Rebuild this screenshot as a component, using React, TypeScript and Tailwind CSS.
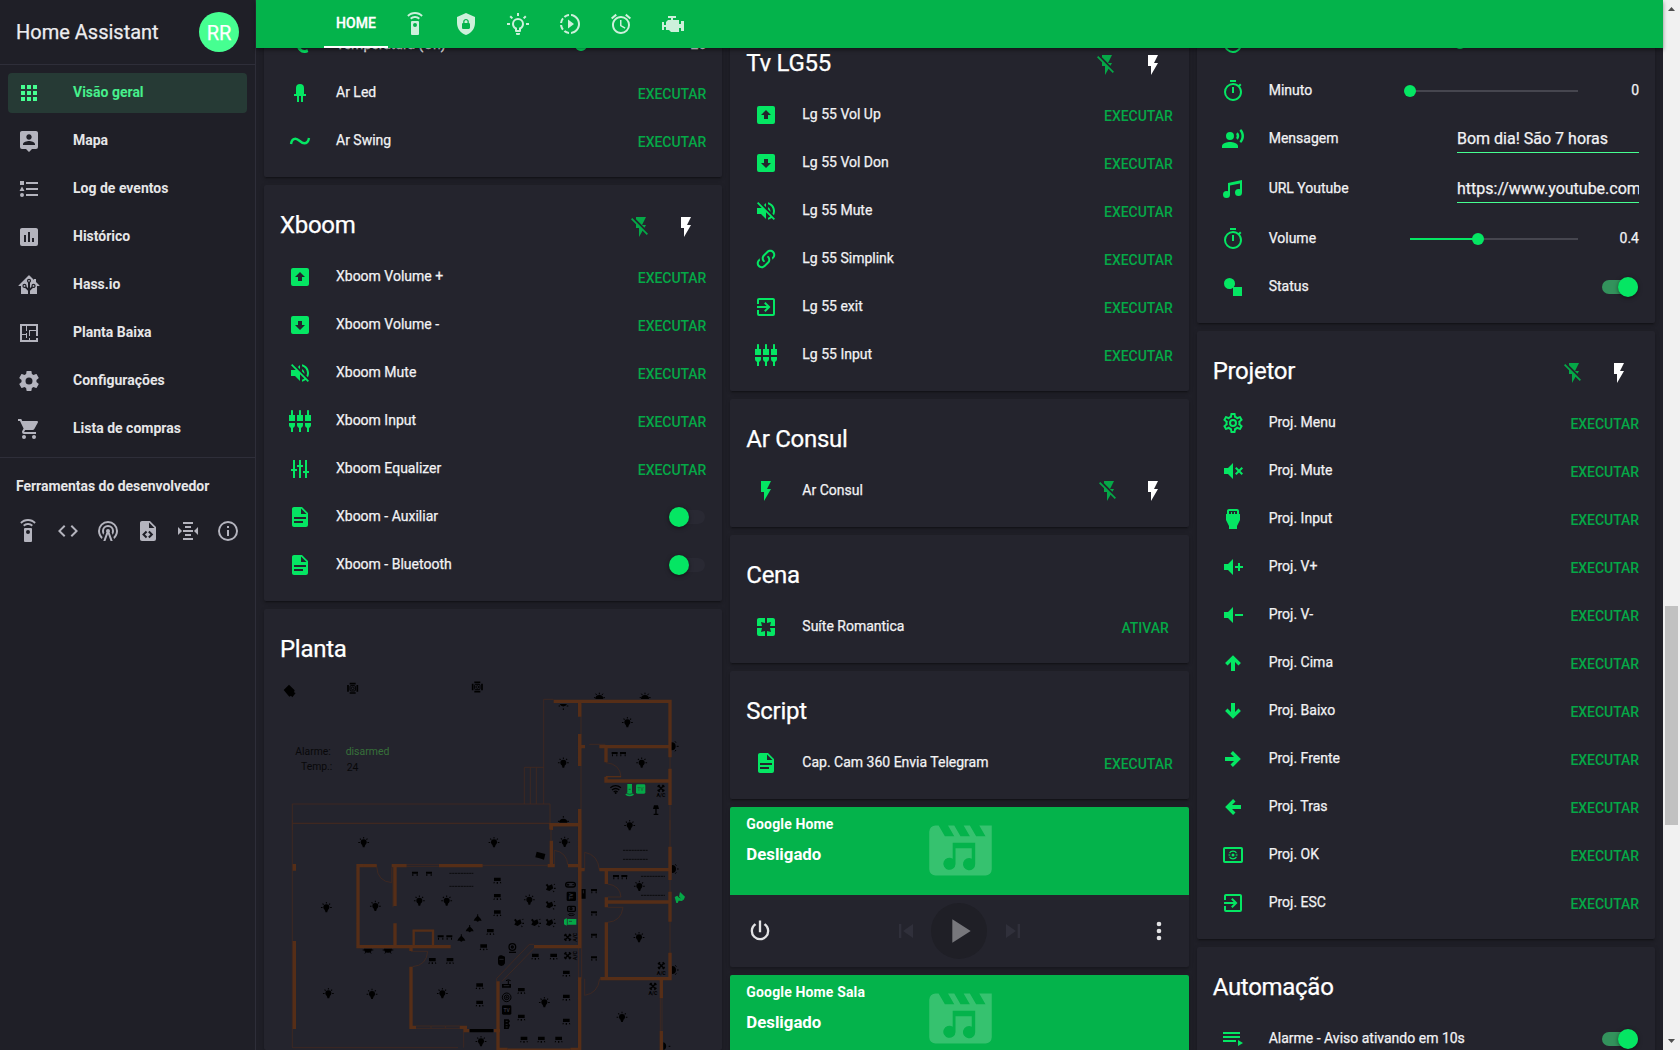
import type { ReactNode } from "react";
import {
  MdAlarm,
  MdSettingsInputComponent,
  MdSettingsInputHdmi,
  MdSlowMotionVideo,
  MdVolumeOff,
} from "react-icons/md";

const P = {
  apps: "M16,20H20V16H16M16,14H20V10H16M10,8H14V4H10M16,8H20V4H16M10,14H14V10H10M4,14H8V10H4M4,20H8V16H4M10,20H14V16H10M4,8H8V4H4V8Z",
  map: "M18,16H6V15.1C6,13.1 10,12 12,12C14,12 18,13.1 18,15.1M12,5.3C13.5,5.3 14.7,6.5 14.7,8C14.7,9.5 13.5,10.7 12,10.7C10.5,10.7 9.3,9.5 9.3,8C9.3,6.5 10.5,5.3 12,5.3M19,2H5C3.89,2 3,2.89 3,4V18A2,2 0 0,0 5,20H9L12,23L15,20H19A2,2 0 0,0 21,18V4C21,2.89 20.1,2 19,2Z",
  log: "M5,9.5L7.5,14H2.5L5,9.5M3,4H7V8H3V4M5,20A2,2 0 0,0 7,18A2,2 0 0,0 5,16A2,2 0 0,0 3,18A2,2 0 0,0 5,20M9,5V7H21V5H9M9,19H21V17H9V19M9,13H21V11H9V13Z",
  history: "M17,17H15V13H17M13,17H11V7H13M9,17H7V10H9M19,3H5C3.89,3 3,3.89 3,5V19A2,2 0 0,0 5,21H19A2,2 0 0,0 21,19V5C21,3.89 20.1,3 19,3Z",
  hass: "M21.8,13H20V21H13V17.67L15.79,14.88L16.5,15C17.66,15 18.6,14.06 18.6,12.9C18.6,11.74 17.66,10.8 16.5,10.8A2.1,2.1 0 0,0 14.4,12.9L14.5,13.61L13,15.13V9.65C13.66,9.29 14.1,8.6 14.1,7.8A2.1,2.1 0 0,0 12,5.7A2.1,2.1 0 0,0 9.9,7.8C9.9,8.6 10.34,9.29 11,9.65V15.13L9.5,13.61L9.6,12.9A2.1,2.1 0 0,0 7.5,10.8A2.1,2.1 0 0,0 5.4,12.9A2.1,2.1 0 0,0 7.5,15L8.21,14.88L11,17.67V21H4V13H2.25C1.83,13 1.42,13 1.42,12.79C1.43,12.57 1.85,12.15 2.28,11.72L11,3C11.33,2.67 11.67,2.33 12,2.33C12.33,2.33 12.67,2.67 13,3L17,7V6H19V9L21.78,11.78C22.18,12.18 22.59,12.59 22.6,12.8C22.6,13 22.2,13 21.8,13M7.5,12A0.9,0.9 0 0,1 8.4,12.9A0.9,0.9 0 0,1 7.5,13.8A0.9,0.9 0 0,1 6.6,12.9A0.9,0.9 0 0,1 7.5,12M16.5,12C17,12 17.4,12.4 17.4,12.9C17.4,13.4 17,13.8 16.5,13.8A0.9,0.9 0 0,1 15.6,12.9A0.9,0.9 0 0,1 16.5,12M12,6.9C12.5,6.9 12.9,7.3 12.9,7.8C12.9,8.3 12.5,8.7 12,8.7C11.5,8.7 11.1,8.3 11.1,7.8C11.1,7.3 11.5,6.9 12,6.9Z",
  floor: "M10,5V10H9V5H5V13H9V12H10V17H9V14H5V19H12V17H13V19H19V17H21V21H3V3H21V15H19V10H13V15H12V9H19V5H10Z",
  settings: "M12,15.5A3.5,3.5 0 0,1 8.5,12A3.5,3.5 0 0,1 12,8.5A3.5,3.5 0 0,1 15.5,12A3.5,3.5 0 0,1 12,15.5M19.43,12.97C19.47,12.65 19.5,12.33 19.5,12C19.5,11.67 19.47,11.34 19.43,11L21.54,9.37C21.73,9.22 21.78,8.95 21.66,8.73L19.66,5.27C19.54,5.05 19.27,4.96 19.05,5.05L16.56,6.05C16.04,5.66 15.5,5.32 14.87,5.07L14.5,2.42C14.46,2.18 14.25,2 14,2H10C9.75,2 9.54,2.18 9.5,2.42L9.13,5.07C8.5,5.32 7.96,5.66 7.44,6.05L4.95,5.05C4.73,4.96 4.46,5.05 4.34,5.27L2.34,8.73C2.21,8.95 2.27,9.22 2.46,9.37L4.57,11C4.53,11.34 4.5,11.67 4.5,12C4.5,12.33 4.53,12.65 4.57,12.97L2.46,14.63C2.27,14.78 2.21,15.05 2.34,15.27L4.34,18.73C4.46,18.95 4.73,19.03 4.95,18.95L7.44,17.94C7.96,18.34 8.5,18.68 9.13,18.93L9.5,21.58C9.54,21.82 9.75,22 10,22H14C14.25,22 14.46,21.82 14.5,21.58L14.87,18.93C15.5,18.67 16.04,18.34 16.56,17.94L19.05,18.95C19.27,19.03 19.54,18.95 19.66,18.73L21.66,15.27C21.78,15.05 21.73,14.78 21.54,14.63L19.43,12.97Z",
  cart: "M17,18C15.89,18 15,18.89 15,20A2,2 0 0,0 17,22A2,2 0 0,0 19,20C19,18.89 18.1,18 17,18M1,2V4H3L6.6,11.59L5.24,14.04C5.09,14.32 5,14.65 5,15A2,2 0 0,0 7,17H19V15H7.42A0.25,0.25 0 0,1 7.17,14.75C7.17,14.7 7.18,14.66 7.2,14.63L8.1,13H15.55C16.3,13 16.96,12.58 17.3,11.97L20.88,5.5C20.95,5.34 21,5.17 21,5A1,1 0 0,0 20,4H5.21L4.27,2M7,18C5.89,18 5,18.89 5,20A2,2 0 0,0 7,22A2,2 0 0,0 9,20C9,18.89 8.1,18 7,18Z",
  remote: "M12,0C8.96,0 6.21,1.23 4.22,3.22L5.63,4.63C7.26,3 9.5,2 12,2C14.5,2 16.74,3 18.36,4.64L19.77,3.23C17.79,1.23 15.04,0 12,0M7.05,6.05L8.46,7.46C9.37,6.56 10.62,6 12,6C13.38,6 14.63,6.56 15.54,7.46L16.95,6.05C15.68,4.78 13.93,4 12,4C10.07,4 8.32,4.78 7.05,6.05M12,15A2,2 0 0,1 10,13A2,2 0 0,1 12,11A2,2 0 0,1 14,13A2,2 0 0,1 12,15M15,9H9A1,1 0 0,0 8,10V22A1,1 0 0,0 9,23H15A1,1 0 0,0 16,22V10A1,1 0 0,0 15,9Z",
  code: "M14.6,16.6L19.2,12L14.6,7.4L16,6L22,12L16,18L14.6,16.6M9.4,16.6L4.8,12L9.4,7.4L8,6L2,12L8,18L9.4,16.6Z",
  tower: "M12,10A2,2 0 0,1 14,12C14,12.5 13.82,12.94 13.53,13.29L16.7,22H14.57L12,14.93L9.43,22H7.3L10.47,13.29C10.18,12.94 10,12.5 10,12A2,2 0 0,1 12,10M12,8A4,4 0 0,0 8,12C8,12.5 8.1,13 8.28,13.46L7.4,15.86C6.53,14.81 6,13.47 6,12A6,6 0 0,1 12,6A6,6 0 0,1 18,12C18,13.47 17.47,14.81 16.6,15.86L15.72,13.46C15.9,13 16,12.5 16,12A4,4 0 0,0 12,8M12,4A8,8 0 0,0 4,12C4,14.36 5,16.5 6.64,17.94L5.92,19.94C3.54,18.11 2,15.23 2,12A10,10 0 0,1 12,2A10,10 0 0,1 22,12C22,15.23 20.46,18.11 18.08,19.94L17.36,17.94C19,16.5 20,14.36 20,12A8,8 0 0,0 12,4Z",
  fileCode: "M13,9H18.5L13,3.5V9M6,2H14L20,8V20A2,2 0 0,1 18,22H6C4.89,22 4,21.1 4,20V4C4,2.89 4.89,2 6,2M6.12,15.5L9.86,19.24L11.28,17.83L8.95,15.5L11.28,13.17L9.86,11.76L6.12,15.5M17.28,15.5L13.54,11.76L12.12,13.17L14.45,15.5L12.12,17.83L13.54,19.24L17.28,15.5Z",
  altimeter: "M7,3V5H17V3H7M9,7V9H15V7H9M2,7.96V16.04L6.03,12L2,7.96M22.03,7.96L18,12L22.03,16.04V7.96M7,11V13H17V11H7M9,15V17H15V15H9M7,19V21H17V19H7Z",
  info: "M11,9H13V7H11M12,20C7.59,20 4,16.41 4,12C4,7.59 7.59,4 12,4C16.41,4 20,7.59 20,12C20,16.41 16.41,20 12,20M12,2A10,10 0 0,0 2,12A10,10 0 0,0 12,22A10,10 0 0,0 22,12A10,10 0 0,0 12,2M11,17H13V11H11V17Z",
  shield: "M12,1L3,5V11C3,16.55 6.84,21.74 12,23C17.16,21.74 21,16.55 21,11V5L12,1M12,7C13.4,7 14.8,8.1 14.8,9.5V11C15.4,11 16,11.6 16,12.3V15.8C16,16.4 15.4,17 14.7,17H9.2C8.6,17 8,16.4 8,15.7V12.2C8,11.6 8.6,11 9.2,11V9.5C9.2,8.1 10.6,7 12,7M12,8.2C11.2,8.2 10.5,8.7 10.5,9.5V11H13.5V9.5C13.5,8.7 12.8,8.2 12,8.2Z",
  bulb: "M20,11H23V13H20V11M1,11H4V13H1V11M13,1V4H11V1H13M4.92,3.5L7.05,5.64L5.63,7.05L3.5,4.93L4.92,3.5M16.95,5.63L19.07,3.5L20.5,4.93L18.37,7.05L16.95,5.63M12,6A6,6 0 0,1 18,12C18,14.22 16.79,16.16 15,17.2V19A1,1 0 0,1 14,20H10A1,1 0 0,1 9,19V17.2C7.21,16.16 6,14.22 6,12A6,6 0 0,1 12,6M14,21V22A1,1 0 0,1 13,23H11A1,1 0 0,1 10,22V21H14M11,18H13V15.87C14.73,15.43 16,13.86 16,12A4,4 0 0,0 12,8A4,4 0 0,0 8,12C8,13.86 9.27,15.43 11,15.87V18Z",
  engine: "M7,4V6H10V8H7L5,10V13H3V10H1V18H3V15H5V18H8L10,20H18V16H20V19H23V9H20V12H18V8H12V6H15V4H7Z",
  celsius: "M16.5,5C18.05,5 19.5,5.47 20.69,6.28L19.53,9.17C18.73,8.44 17.67,8 16.5,8C14,8 12,10 12,12.5C12,15 14,17 16.5,17C17.53,17 18.47,16.66 19.23,16.08L20.37,18.93C19.24,19.61 17.92,20 16.5,20A7.5,7.5 0 0,1 9,12.5A7.5,7.5 0 0,1 16.5,5M6,3A3,3 0 0,1 9,6A3,3 0 0,1 6,9A3,3 0 0,1 3,6A3,3 0 0,1 6,3Z",
  led: "M12,3A4,4 0 0 0 8,7V13H6V15H9V21H11V15H13V21H15V15H18V13H16V7A4,4 0 0 0 12,3Z",
  boxUp: "M12,7L7,12H10V16H14V12H17L12,7M19,21H5A2,2 0 0,1 3,19V5A2,2 0 0,1 5,3H19A2,2 0 0,1 21,5V19A2,2 0 0,1 19,21Z",
  boxDown: "M12,17L17,12H14V8H10V12H7L12,17M5,3H19A2,2 0 0,1 21,5V19A2,2 0 0,1 19,21H5A2,2 0 0,1 3,19V5A2,2 0 0,1 5,3Z",
  tune: "M5 3V12H3V14H5V21H7V14H9V12H7V3M11 3V8H9V10H11V21H13V10H15V8H13V3M17 3V14H15V16H17V21H19V16H21V14H19V3Z",
  doc: "M13,9H18.5L13,3.5V9M6,2H14L20,8V20A2,2 0 0,1 18,22H6C4.89,22 4,21.1 4,20V4C4,2.89 4.89,2 6,2M15,18V16H6V18H15M18,14V12H6V14H18Z",
  flash: "M7,2V13H10V22L17,10H13L17,2H7Z",
  flashOff: "M17,10H13L17,2H7V4.18L15.46,12.64M3.27,3L2,4.27L7,9.27V13H10V22L13.58,15.86L17.73,20L19,18.73L3.27,3Z",
  link: "M10.59,13.41C11,13.8 11,14.44 10.59,14.83C10.2,15.22 9.56,15.22 9.17,14.83C7.22,12.88 7.22,9.71 9.17,7.76V7.76L12.71,4.22C14.66,2.27 17.83,2.27 19.78,4.22C21.73,6.17 21.73,9.34 19.78,11.29L18.29,12.78C18.3,11.96 18.17,11.14 17.89,10.36L18.36,9.88C19.54,8.71 19.54,6.81 18.36,5.64C17.19,4.46 15.29,4.46 14.12,5.64L10.59,9.17C9.41,10.34 9.41,12.24 10.59,13.41M13.41,9.17C13.8,8.78 14.44,8.78 14.83,9.17C16.78,11.12 16.78,14.29 14.83,16.24V16.24L11.29,19.78C9.34,21.73 6.17,21.73 4.22,19.78C2.27,17.83 2.27,14.66 4.22,12.71L5.71,11.22C5.7,12.04 5.83,12.86 6.11,13.65L5.64,14.12C4.46,15.29 4.46,17.19 5.64,18.36C6.81,19.54 8.71,19.54 9.88,18.36L13.41,14.83C14.59,13.66 14.59,11.76 13.41,10.59C13,10.2 13,9.56 13.41,9.17Z",
  exit: "M19,3H5C3.89,3 3,3.89 3,5V9H5V5H19V19H5V15H3V19A2,2 0 0,0 5,21H19A2,2 0 0,0 21,19V5C21,3.89 20.1,3 19,3M10.08,15.58L11.5,17L16.5,12L11.5,7L10.08,8.41L12.67,11H3V13H12.67L10.08,15.58Z",
  pages: "M19,3H13V8L17,7L16,11H21V5C21,3.89 20.1,3 19,3M17,17L13,16V21H19A2,2 0 0,0 21,19V13H16M8,13H3V19A2,2 0 0,0 5,21H11V16L7,17M3,5V11H8L7,7L11,8V3H5C3.89,3 3,3.89 3,5Z",
  timer: "M12,20A7,7 0 0,1 5,13A7,7 0 0,1 12,6A7,7 0 0,1 19,13A7,7 0 0,1 12,20M19.03,7.39L20.45,5.97C20,5.46 19.55,5 19.04,4.56L17.62,6C16.07,4.74 14.12,4 12,4A9,9 0 0,0 3,13A9,9 0 0,0 12,22C17,22 21,17.97 21,13C21,10.88 20.26,8.93 19.03,7.39M11,14H13V8H11M15,1H9V3H15V1Z",
  voice: "M9,5A4,4 0 0,1 13,9A4,4 0 0,1 9,13A4,4 0 0,1 5,9A4,4 0 0,1 9,5M9,15C11.67,15 17,16.34 17,19V21H1V19C1,16.34 6.33,15 9,15M16.76,5.36C18.78,7.56 18.78,10.61 16.76,12.63L15.08,10.94C15.92,9.76 15.92,8.23 15.08,7.05L16.76,5.36M20.07,2C24,6.05 23.97,12.11 20.07,16L18.44,14.37C21.21,11.19 21.21,6.65 18.44,3.63L20.07,2Z",
  music: "M21,3V15.5A3.5,3.5 0 0,1 17.5,19A3.5,3.5 0 0,1 14,15.5A3.5,3.5 0 0,1 17.5,12C18.04,12 18.55,12.12 19,12.34V6.47L9,8.6V17.5A3.5,3.5 0 0,1 5.5,21A3.5,3.5 0 0,1 2,17.5A3.5,3.5 0 0,1 5.5,14C6.04,14 6.55,14.12 7,14.34V6L21,3Z",
  shapes: "M8.5,3A5.5,5.5 0 0,1 14,8.5C14,9.83 13.53,11.05 12.74,12H21V21H12V12.74C11.05,13.53 9.83,14 8.5,14A5.5,5.5 0 0,1 3,8.5A5.5,5.5 0 0,1 8.5,3Z",
  gear: "M12,8A4,4 0 0,1 16,12A4,4 0 0,1 12,16A4,4 0 0,1 8,12A4,4 0 0,1 12,8M12,10A2,2 0 0,0 10,12A2,2 0 0,0 12,14A2,2 0 0,0 14,12A2,2 0 0,0 12,10M10,22C9.75,22 9.54,21.82 9.5,21.58L9.13,18.93C8.5,18.68 7.96,18.34 7.44,17.94L4.95,18.95C4.73,19.03 4.46,18.95 4.34,18.73L2.34,15.27C2.21,15.05 2.27,14.78 2.46,14.63L4.57,12.97L4.5,12L4.57,11L2.46,9.37C2.27,9.22 2.21,8.95 2.34,8.73L4.34,5.27C4.46,5.05 4.73,4.96 4.95,5.05L7.44,6.05C7.96,5.66 8.5,5.32 9.13,5.07L9.5,2.42C9.54,2.18 9.75,2 10,2H14C14.25,2 14.46,2.18 14.5,2.42L14.87,5.07C15.5,5.32 16.04,5.66 16.56,6.05L19.05,5.05C19.27,4.96 19.54,5.05 19.66,5.27L21.66,8.73C21.79,8.95 21.73,9.22 21.54,9.37L19.43,11L19.5,12L19.43,13L21.54,14.63C21.73,14.78 21.79,15.05 21.66,15.27L19.66,18.73C19.54,18.95 19.27,19.04 19.05,18.95L16.56,17.95C16.04,18.34 15.5,18.68 14.87,18.93L14.5,21.58C14.46,21.82 14.25,22 14,22H10M11.25,4L10.88,6.61C9.68,6.86 8.62,7.5 7.85,8.39L5.44,7.35L4.69,8.65L6.8,10.2C6.4,11.37 6.4,12.64 6.8,13.8L4.68,15.36L5.43,16.66L7.86,15.62C8.63,16.5 9.68,17.14 10.87,17.38L11.24,20H12.76L13.13,17.39C14.32,17.14 15.37,16.5 16.14,15.62L18.57,16.66L19.32,15.36L17.2,13.81C17.6,12.64 17.6,11.37 17.2,10.2L19.31,8.65L18.56,7.35L16.15,8.39C15.38,7.5 14.32,6.86 13.12,6.62L12.75,4H11.25Z",
  volMute: "M3,9H7L12,4V20L7,15H3V9M16.59,12L14,9.41L15.41,8L18,10.59L20.59,8L22,9.41L19.41,12L22,14.59L20.59,16L18,13.41L15.41,16L14,14.59L16.59,12Z",
  volPlus: "M3,9H7L12,4V20L7,15H3V9M14,11H17V8H19V11H22V13H19V16H17V13H14V11Z",
  volMinus: "M3,9H7L12,4V20L7,15H3V9M14,11H22V13H14V11Z",
  up: "M14,20H10V11L6.5,14.5L4.08,12.08L12,4.16L19.92,12.08L17.5,14.5L14,11V20Z",
  down: "M10,4H14V13L17.5,9.5L19.92,11.92L12,19.84L4.08,11.92L6.5,9.5L10,13V4Z",
  right: "M4,10V14H13L9.5,17.5L11.92,19.92L19.84,12L11.92,4.08L9.5,6.5L13,10H4Z",
  left: "M20,10V14H11L14.5,17.5L12.08,19.92L4.16,12L12.08,4.08L14.5,6.5L11,10H20Z",
  playlist: "M19,9H2V11H19V9M19,5H2V7H19V5M2,15H15V13H2V15M17,13V19L22,16L17,13Z",
  power: "M16.56,5.44L15.11,6.89C16.84,7.94 18,9.83 18,12A6,6 0 0,1 12,18A6,6 0 0,1 6,12C6,9.83 7.16,7.94 8.88,6.88L7.44,5.44C5.36,6.88 4,9.28 4,12A8,8 0 0,0 12,20A8,8 0 0,0 20,12C20,9.28 18.64,6.88 16.56,5.44M13,3H11V13H13",
  prev: "M6,6H8V18H6V6M9.5,12L18,18V6L9.5,12Z",
  next: "M16,18H18V6H16M6,18L14.5,12L6,6V18Z",
  play: "M8,5V19L19,12L8,5Z",
  dots: "M12,16A2,2 0 0,1 14,18A2,2 0 0,1 12,20A2,2 0 0,1 10,18A2,2 0 0,1 12,16M12,10A2,2 0 0,1 14,12A2,2 0 0,1 12,14A2,2 0 0,1 10,12A2,2 0 0,1 12,10M12,4A2,2 0 0,1 14,6A2,2 0 0,1 12,8A2,2 0 0,1 10,6A2,2 0 0,1 12,4Z",
  clapper: "M18,4L20,7.4H17L15,4H13L15,7.4H12L10,4H8L10,7.4H7L5,4H4A2,2 0 0,0 2,6V18A2,2 0 0,0 4,20H20A2,2 0 0,0 22,18V4H18Z",
};

function Icon({ d, className = "size-6" }: { d: string; className?: string }) {
  return (
    <svg viewBox="0 0 24 24" className={`shrink-0 ${className}`} fill="currentColor" fillRule="evenodd">
      <path d={d} />
    </svg>
  );
}

const sineIcon = (
  <svg viewBox="0 0 24 24" className="size-6" fill="none" stroke="currentColor" strokeWidth="2.4">
    <path d="M3,15C3.6,11.3 5.2,9.7 7.4,9.7C10.8,9.7 12.8,14.3 16.2,14.3C18.8,14.3 20.4,12.4 21,9" />
  </svg>
);

const okIcon = (
  <svg viewBox="0 0 24 24" className="size-6" fill="none" stroke="currentColor" strokeWidth="2">
    <rect x="3" y="5" width="18" height="14" rx="0.8" />
    <path d="M8.6,9.8A4.2,4.2 0 0 1 15.4,9.8M8.6,14.2A4.2,4.2 0 0 0 15.4,14.2" strokeWidth="1.3" />
    <path d="M7.5,11.3H9.3M7.5,12.7H9.3M14.7,11.3H16.5M14.7,12.7H16.5" strokeWidth="0.7" />
    <circle cx="12" cy="12" r="1.5" fill="currentColor" stroke="none" />
  </svg>
);

const navItems: [string, string][] = [
  ["Visão geral", P.apps],
  ["Mapa", P.map],
  ["Log de eventos", P.log],
  ["Histórico", P.history],
  ["Hass.io", P.hass],
  ["Planta Baixa", P.floor],
  ["Configurações", P.settings],
  ["Lista de compras", P.cart],
];

function Sidebar() {
  return (
    <aside className="flex w-64 shrink-0 flex-col border-r border-[#2e2e39] bg-[#1f1f27] text-[#e6e6e8]">
      <div className="flex h-[65px] items-center justify-between border-b border-[#2e2e39] pr-4 pl-4">
        <span className="text-xl text-[#ededf0] [-webkit-text-stroke:0.25px]">Home Assistant</span>
        <span className="flex size-10 items-center justify-center rounded-full bg-[#46ff91] pt-px text-xl text-white [-webkit-text-stroke:0.25px]">
          RR
        </span>
      </div>
      <nav className="flex flex-col gap-2 pt-2">
        {navItems.map(([label, d], i) => (
          <div
            key={label}
            className={`mr-2 ml-2 flex h-10 items-center gap-8 rounded-sm pl-[9px] ${i === 0 ? "bg-[#263a35] text-[#46f08c]" : ""}`}
          >
            <Icon d={d} className={i === 0 ? "size-6 text-[#46ff91]" : "size-6 text-[#b4b4be]"} />
            <span className="pb-0.5 text-sm font-bold">{label}</span>
          </div>
        ))}
      </nav>
      <div className="mt-2 border-t border-[#2e2e39] px-4 pt-[18px]">
        <div className="text-sm leading-5 font-bold tracking-[-0.04px]">Ferramentas do desenvolvedor</div>
        <div className="mt-[23px] flex gap-4 text-[#b4b4be]">
          {[P.remote, P.code, P.tower, P.fileCode, P.altimeter, P.info].map((d) => (
            <Icon key={d} d={d} />
          ))}
        </div>
      </div>
    </aside>
  );
}

function TabBar() {
  const icons: ReactNode[] = [
    <Icon d={P.remote} />,
    <Icon d={P.shield} />,
    <Icon d={P.bulb} />,
    <MdSlowMotionVideo className="size-6" />,
    <MdAlarm className="size-6" />,
    <Icon d={P.engine} />,
  ];
  return (
    <header className="relative z-10 flex h-12 shrink-0 bg-[#04b34b] pl-[68px] text-white shadow-[0_2px_4px_rgba(0,0,0,0.45)]">
      <div className="mr-px flex w-16 items-center justify-center border-b-2 border-white text-sm font-medium tracking-[0.1px] [-webkit-text-stroke:0.3px]">
        HOME
      </div>
      {icons.map((icon, i) => (
        <div key={i} className="flex w-[51.6px] items-center justify-center text-white/80">
          {icon}
        </div>
      ))}
    </header>
  );
}

function Card({ title, action, children, className = "pb-4" }: { title?: string; action?: boolean; children?: ReactNode; className?: string }) {
  return (
    <section className={`shrink-0 rounded-xs bg-[#24242d] shadow-[0_2px_2px_rgba(0,0,0,0.14),0_1px_5px_rgba(0,0,0,0.12),0_3px_1px_-2px_rgba(0,0,0,0.2)] ${className}`}>
      {title && (
        <div className="flex h-[72px] justify-between pt-6 pr-6 pl-4">
          <h2 className="text-2xl leading-8 tracking-[-0.012em] text-white [-webkit-text-stroke:0.25px]">{title}</h2>
          {action && (
            <div className="mt-1.5 flex h-6 gap-[21.5px]">
              <Icon d={P.flashOff} className="size-6 text-[#05a847]" />
              <Icon d={P.flash} className="size-6 text-white" />
            </div>
          )}
        </div>
      )}
      <div className="flex flex-col gap-2">{children}</div>
    </section>
  );
}

function Row({ icon, label, children, tall }: { icon: string | ReactNode; label: string; children?: ReactNode; tall?: boolean }) {
  return (
    <div className={`flex items-center px-4 ${tall ? "h-[42px] pb-[3px]" : "h-10"}`}>
      <span className="flex w-10 shrink-0 items-center justify-center text-[#05e663]">
        {typeof icon === "string" ? <Icon d={icon} /> : icon}
      </span>
      <span className="ml-4 flex-1 pb-0.5 text-sm whitespace-nowrap text-[#f2f2f4] [-webkit-text-stroke:0.25px]">{label}</span>
      {children}
    </div>
  );
}

function Run({ text = "EXECUTAR" }: { text?: string }) {
  return (
    <span className={`pt-0.5 text-sm font-medium tracking-[-0.05px] text-[#05a847] ${text === "ATIVAR" ? "mr-1" : ""}`}>{text}</span>
  );
}

function Toggle({ on }: { on?: boolean }) {
  return (
    <span className={`mr-px flex h-3.5 w-9 items-center rounded-full ${on ? "justify-end bg-[#33925c]" : "bg-[#292933]"}`}>
      <span className="size-5 rounded-full bg-[#05e663] shadow-[0_1px_4px_rgba(0,0,0,0.5)]" />
    </span>
  );
}

function Slider({ pct, value }: { pct: number; value: string }) {
  return (
    <>
      <span className="flex h-0.5 w-[168px] items-center bg-[#46464f]">
        <span className="h-0.5 bg-[#05e663]" style={{ width: `${pct}%` }} />
        <span className="-ml-1.5 size-3 shrink-0 rounded-full bg-[#05e663]" />
      </span>
      <span className="w-[61px] pb-0.5 text-right text-sm text-[#f2f2f4] [-webkit-text-stroke:0.25px]">{value}</span>
    </>
  );
}

function Field({ value }: { value: string }) {
  return (
    <span className="flex h-[29px] w-[182px] items-center overflow-hidden border-b border-[#46ff91] pt-0.5 text-base whitespace-nowrap text-[#f2f2f4] [-webkit-text-stroke:0.25px]">
      {value}
    </span>
  );
}

function MediaCard({ name }: { name: string }) {
  return (
    <section className="shrink-0 overflow-hidden rounded-xs bg-[#24242d] shadow-[0_2px_2px_rgba(0,0,0,0.14),0_1px_5px_rgba(0,0,0,0.12)]">
      <div className="grid h-[88px] grid-cols-3 bg-[#04b34b] pt-[7px] pl-4">
        <div className="whitespace-nowrap text-white">
          <div className="text-sm leading-5 font-bold tracking-[0.15px]">{name}</div>
          <div className="mt-2 text-[16.8px] leading-6 font-bold">Desligado</div>
        </div>
        <svg viewBox="0 0 24 24" className="-mt-px ml-[29px] size-[75px] overflow-visible text-white/20" fill="currentColor">
          <path fillRule="evenodd" d={`${P.clapper}M9.5,9.5V14.6A1.95,1.95 0 1 0 10.4,16.3V11.3H15.6V14.6A1.95,1.95 0 1 0 16.7,16.3V9.5Z`} />
        </svg>
      </div>
      <div className="flex h-[72px] items-center justify-between px-4">
        <Icon d={P.power} className="size-7 text-[#e2e2e4]" />
        <div className="flex items-center gap-3">
          <Icon d={P.prev} className="-mr-px size-7 text-[#30303b]" />
          <span className="flex size-14 items-center justify-center rounded-full bg-[#1f1f26]">
            <Icon d={P.play} className="size-10 text-[#77777c]" />
          </span>
          <Icon d={P.next} className="size-7 text-[#30303b]" />
        </div>
        <Icon d={P.dots} className="size-7 text-[#e2e2e4]" />
      </div>
    </section>
  );
}

/* Floor plan drawing. Its units are a third of a pixel. */
type Pt = [number, number];

const lampPath =
  "M12,5.6A6.4,6.4 0 0,1 18.4,12C18.4,14.4 17,16.4 15,17.6V20H14V22.5H10V20H9V17.6C7,16.4 5.6,14.4 5.6,12A6.4,6.4 0 0,1 12,5.6M20,11.2H23.4V13.4H20ZM.6,11.2H4V13.4H.6ZM11,.8H13V4H11ZM3.2,4.9L4.8,3.3L7,5.5L5.5,7ZM17,5.5L19.2,3.3L20.8,4.9L18.5,7Z";

function Lamp({ p }: { p: Pt }) {
  return <path d={lampPath} transform={`translate(${p[0] - 17} ${p[1] - 17}) scale(1.42)`} />;
}

function Spot({ p }: { p: Pt }) {
  return <path d="M-10,-8H10V2H-10ZM-11,6L-8,4V9H-12ZM-2,5H2V10H-2ZM11,6L8,4V9H12Z" transform={`translate(${p[0]} ${p[1]})`} />;
}

function MiniSpot({ p }: { p: Pt }) {
  return <path d="M-9,-6H9V0H-9ZM-8,1H-5V7H-8ZM5,1H8V7H5Z" transform={`translate(${p[0]} ${p[1]})`} />;
}

function Tilted({ p }: { p: Pt }) {
  return <path d="M-13,-8L-8,-12L-4,-6L6,-10L10,2L-2,10L-12,6L-8,-2ZM10,-10L15,-12V-8ZM12,0H17V4H12ZM8,8L14,12L10,14Z" transform={`translate(${p[0]} ${p[1]})`} />;
}

function Fan({ p, vertical }: { p: Pt; vertical?: boolean }) {
  return (
    <g transform={`translate(${p[0]} ${p[1]})`}>
      <path d="M-9,-9L-3,-3L0,0L3,-3L9,-9M-9,9L-3,3L0,0L3,3L9,9M-10,-4L-4,-10M4,-10L10,-4M-10,4L-4,10M4,10L10,4" fill="none" stroke="#000" strokeWidth="4.5" />
      <text x="0" y={vertical ? 7 : 27} transform={vertical ? "rotate(-90) translate(0 20)" : undefined} textAnchor="middle" fontSize="16" fontWeight="700">
        A/C
      </text>
    </g>
  );
}

function TvBox({ p, on, turned }: { p: Pt; on?: boolean; turned?: boolean }) {
  return (
    <g transform={`translate(${p[0]} ${p[1]})${turned ? " rotate(-90)" : ""}`}>
      <rect x="-14" y="-14" width="28" height="28" rx="4" fill={on ? "#05a847" : "#000"} />
      <text y="5" textAnchor="middle" fontSize="15" fontWeight="700" fill={on ? "#1e6b3c" : "#33333d"}>TV</text>
    </g>
  );
}

const lampsTop: Pt[] = [[1114, 367], [922, 488], [1157, 488], [1121, 676]];
const lampsBottom: Pt[] = [
  [323, 67], [714, 67], [926, 66], [211, 262], [358, 258], [490, 242], [572, 242], [820, 239], [1150, 198],
  [1149, 352], [217, 520], [348, 522], [559, 520], [865, 547], [1098, 591], [675, 664],
];
const spots: Pt[] = [
  [724, 181], [724, 230], [724, 279], [703, 335], [683, 381], [529, 422], [582, 422], [838, 409], [893, 409], [931, 460],
  [931, 532], [931, 604], [671, 498], [671, 550], [796, 512], [796, 592], [804, 658], [856, 658], [908, 658],
];
const miniSpots: Pt[] = [
  [477, 161], [519, 161], [554, 352], [580, 352], [1080, 171], [1105, 171], [1014, 213], [1014, 280], [1014, 347], [1014, 415],
];
const tilted: Pt[] = [[882, 203], [882, 255], [787, 308], [838, 308], [882, 308]];
const pendants: Pt[] = [[665, 295], [641, 327], [616, 355]];

function FloorPlan() {
  return (
    <svg viewBox="0 0 1375 1107" className="h-[369px] w-[458.33px] font-[Roboto,sans-serif]">
      <g transform="translate(-24 -243)">
        <g fill="none" stroke="#44291f" strokeWidth="2.4">
          <path d="M893,298H863V612M805,612V502H863M823,502V612M841,502V612M109,690V612H882V672M109,670H882M975,310V690M1242,470V690M1000,433H1048M1050,488Q1092,492 1095,530" />
        </g>
        <g fill="none" stroke="#562e17" strokeWidth="10">
          <path d="M893,304H1247M1242,300V472M1242,506V615M971,300V350M971,402V498M971,627V690M966,440H987M1030,440H1242M1050,440V487M1045,543H1242M1050,530V548M882,674H971M886,670V690" />
          <path d="M1050,530H1095" strokeWidth="4" />
        </g>
        {lampsTop.map((p) => <Lamp key={`${p}`} p={p} />)}
        <path d="M1018,297A12,12 0 0 1 1042,297ZM1155,297A12,12 0 0 1 1179,297ZM910,668A12,12 0 0 1 934,668ZM911,312A12,12 0 0 0 933,312ZM1247,427A12,12 0 0 1 1247,451Z" />
        <path d="M1014,293H1018M1042,293H1047M1030,278V283M1019,281L1022,285M1041,281L1038,285M1151,293H1155M1179,293H1184M1167,278V283M1156,281L1159,285M1178,281L1175,285M906,664H910M934,664H939M922,648V653M908,318H912M932,318H937M922,325V330M1262,439H1268M1257,424L1260,428M1257,454L1260,450" stroke="#000" strokeWidth="3" />
        <path d="M83,270L99,254L116,271L114,277L119,279L109,292L105,287L100,290Z" />
        {([[290, 265], [664, 261]] as Pt[]).map(([x, y]) => (
          <g key={x} transform={`translate(${x} ${y})`} fill="none" stroke="#000">
            <path d="M-14,-10V10M14,-10V10M-9,-14H9M-9,14H9" strokeWidth="5" />
            <rect x="-8" y="-8" width="16" height="16" rx="3" strokeWidth="3" />
            <circle r="4" strokeWidth="2.5" />
          </g>
        ))}
        <MiniSpot p={[1076, 462]} />
        <MiniSpot p={[1101, 462]} />
        <g fill="none" stroke="#000" strokeWidth="4">
          <path d="M1063,563Q1079,551 1095,563M1068,570Q1079,561 1090,570M1073,576Q1079,571 1085,576" />
        </g>
        <circle cx="1079" cy="579" r="3" />
        <path d="M1114,552H1128V577L1134,584Q1121,594 1108,584L1114,577Z" fill="#05a847" />
        <path d="M1110,580Q1121,586 1132,580M1118,568H1124" stroke="#24242d" strokeWidth="2" fill="none" />
        <TvBox p={[1154, 567]} on />
        <Fan p={[1215, 565]} />
        <path d="M1194,616H1206L1209,627H1202V641H1207V645H1193V641H1198V627H1191Z" />
        <g fontSize="34" fill="#08080a">
          <text x="118" y="465" textLength="106" lengthAdjust="spacingAndGlyphs">Alarme:</text>
          <text x="269" y="465" textLength="131" lengthAdjust="spacingAndGlyphs" fill="#37713a">disarmed</text>
          <text x="135" y="510" textLength="94" lengthAdjust="spacingAndGlyphs">Temp.:</text>
          <text x="272" y="513" textLength="35" lengthAdjust="spacingAndGlyphs">24</text>
        </g>
      </g>
      <g transform="translate(-24 417)">
        <g fill="none" stroke="#44291f" strokeWidth="2.4">
          <path d="M109,0V683H606M109,10H882M623,636V683M452,134H549M452,139H549M680,136H875M885,28V62M977,0V149M1242,0V476M977,149V476M411,140V262M362,140Q364,184 407,188M407,142V188M895,140V91Q932,96 936,136M986,149V97Q1026,104 1030,149M465,394H515Q512,436 470,440M1055,192Q1092,196 1095,231H1055M1055,262H1101Q1096,304 1055,307M986,476V526Q1026,520 1031,476M722,475L820,373H834M738,484L834,385M722,475V484M480,618H611M480,625H611M968,383V476M1213,535V633M1218,535V633M525,618V625M568,618V625" />
        </g>
        <g fill="none" stroke="#562e17" strokeWidth="10">
          <path d="M115,132V152M115,363V627M306,132V383M301,137H362M407,137H452M417,137V258M417,310V377M301,380H584M549,137H680M875,137H896M885,10V28M886,62V140M880,14H971M936,137H971M971,0V383M834,380H976M465,383V393M465,440V627M460,622H480M611,622H633M622,632H640M714,632H732M726,484V690M726,688H755M943,688H976M971,472V690M971,149H986M1030,149H1242M1242,80V180M1242,215V305M1242,398V480M1033,476H1247M1216,480V535M1216,633V690M1051,152V192M1051,232V262M1046,246H1242M1051,307V472" />
          <path d="M473,377V332H531V377" strokeWidth="7" />
          <path d="M322,137H362M755,688H943" strokeWidth="5" />
        </g>
        {lampsBottom.map((p) => <Lamp key={`${p}`} p={p} />)}
        {spots.map((p) => <Spot key={`${p}`} p={p} />)}
        {miniSpots.map((p) => <MiniSpot key={`${p}`} p={p} />)}
        {tilted.map((p) => <Tilted key={`${p}`} p={p} />)}
        {pendants.map(([x, y]) => (
          <path key={x} d="M-1.500,-12H1.500V-7L9,1L12,7H4Q0,13 -4,7H-12L-9,1L-1.500,-7Z" transform={`translate(${x} ${y})`} />
        ))}
        <path d="M641,627H712V637H641ZM324,386A12,12 0 0 0 348,386ZM384,386A12,12 0 0 0 408,386ZM1248,135A12,12 0 0 1 1248,159ZM1248,438A12,12 0 0 1 1248,462ZM1222,667A12,12 0 0 1 1222,690ZM842,95L868,102L864,119L848,114L838,112Z" />
        <path d="M908,4H935M580,160H652M580,199H652M1101,91H1175M1101,118H1175M1155,169H1227M1155,226H1227" stroke="#000" strokeWidth="2.200" strokeDasharray="7 1.500" />
        <path d="M320,390H325M347,390H352M380,390H385M407,390H412M326,400L330,397M346,400L342,397M386,400L390,397M406,400L402,397M1263,147H1268M1258,133L1261,137M1258,161L1261,157M1263,450H1268M1258,436L1261,440M1258,464L1261,460M1238,679H1243" stroke="#000" strokeWidth="3" />
        <TvBox p={[946, 229]} turned />
        <TvBox p={[752, 570]} />
        <Fan p={[935, 352]} vertical />
        <Fan p={[935, 407]} vertical />
        <Fan p={[1216, 437]} />
        <Fan p={[1191, 499]} />
        <g fill="none" stroke="#000" strokeWidth="4">
          <rect x="929" y="187" width="29" height="14" rx="7" />
          <path d="M936,191V198M932,194H940M949,194H955" strokeWidth="3" />
          <rect x="935" y="259" width="23" height="15" rx="3" />
          <circle cx="945" cy="266" r="3" />
          <ellipse cx="946" cy="284" rx="9" ry="3" strokeWidth="2.500" />
          <circle cx="769" cy="381" r="10" />
          <circle cx="769" cy="381" r="3" />
          <path d="M759,397H780" />
          <circle cx="752" cy="532" r="13" strokeWidth="3" />
          <circle cx="752" cy="532" r="7" strokeWidth="3" />
          <circle cx="752" cy="532" r="2" strokeWidth="3" />
          <path d="M750,482Q757,477 764,482M757,482V492" strokeWidth="3" />
        </g>
        <path d="M738,492H765V503H738ZM977,207H989V236H977ZM744,598H758L762,604L758,610L762,616L758,627H744ZM726,415Q727,404 737,406L747,410V430Q744,438 736,438Q726,436 726,428Z" />
        <path d="M743,497H760M749,604H755M749,613H755M749,621H755M982,211V220M730,418H743" stroke="#33333d" strokeWidth="2" />
        <path d="M924,299L932,294V297H961V314H932V317L924,313ZM1256,231L1264,227L1269,233L1281,238L1279,243L1268,242L1265,249H1261ZM1272,216L1287,230L1283,240L1276,236L1269,230Z" fill="#05a847" />
        <path d="M934,297V314M939,304H948" stroke="#24242d" strokeWidth="2" />
      </g>
    </svg>
  );
}

function Runs({ items }: { items: [string | ReactNode, string][] }) {
  return (
    <>
      {items.map(([icon, label]) => (
        <Row key={label} icon={icon} label={label}>
          <Run />
        </Row>
      ))}
    </>
  );
}

const muteIcon = <MdVolumeOff className="size-6" />;
const inputIcon = <MdSettingsInputComponent className="size-6" />;
const hdmiIcon = <MdSettingsInputHdmi className="size-6" />;

export default function App() {
  return (
    <div className="flex h-[1050px] w-[1680px] overflow-hidden bg-[#1f1f27] font-[Roboto,sans-serif]">
      <Sidebar />
      <main className="flex h-full min-w-0 flex-1 flex-col">
        <TabBar />
        <div className="grid min-h-0 flex-1 grid-cols-3 gap-2 overflow-hidden px-2">
          <div className="-mt-[23px] flex min-w-0 flex-col gap-2">
            <Card>
              <Row icon={P.celsius} label="Temperatura (On)">
                <Slider pct={61.5} value="26" />
              </Row>
              <Runs items={[[P.led, "Ar Led"], [sineIcon, "Ar Swing"]]} />
            </Card>
            <Card title="Xboom" action>
              <Runs
                items={[
                  [P.boxUp, "Xboom Volume +"],
                  [P.boxDown, "Xboom Volume -"],
                  [muteIcon, "Xboom Mute"],
                  [inputIcon, "Xboom Input"],
                  [P.tune, "Xboom Equalizer"],
                ]}
              />
              <Row icon={P.doc} label="Xboom - Auxiliar"><Toggle /></Row>
              <Row icon={P.doc} label="Xboom - Bluetooth"><Toggle /></Row>
            </Card>
            <Card title="Planta" className="pb-0">
              <FloorPlan />
            </Card>
          </div>

          <div className="-mt-[25px] flex min-w-0 flex-col gap-2">
            <Card title="Tv LG55" action>
              <Runs
                items={[
                  [P.boxUp, "Lg 55 Vol Up"],
                  [P.boxDown, "Lg 55 Vol Don"],
                  [muteIcon, "Lg 55 Mute"],
                  [P.link, "Lg 55 Simplink"],
                  [P.exit, "Lg 55 exit"],
                  [inputIcon, "Lg 55 Input"],
                ]}
              />
            </Card>
            <Card title="Ar Consul">
              <Row icon={P.flash} label="Ar Consul">
                <span className="mr-2 flex gap-5">
                  <Icon d={P.flashOff} className="size-6 text-[#05a847]" />
                  <Icon d={P.flash} className="size-6 text-white" />
                </span>
              </Row>
            </Card>
            <Card title="Cena">
              <Row icon={P.pages} label="Suíte Romantica"><Run text="ATIVAR" /></Row>
            </Card>
            <Card title="Script">
              <Row icon={P.doc} label="Cap. Cam 360 Envia Telegram"><Run /></Row>
            </Card>
            <MediaCard name="Google Home" />
            <MediaCard name="Google Home Sala" />
          </div>

          <div className="-mt-[25px] flex min-w-0 flex-col gap-2">
            <Card>
              <Row icon={P.timer} label="Hora"><Slider pct={30} value="7" /></Row>
              <Row icon={P.timer} label="Minuto"><Slider pct={0} value="0" /></Row>
              <Row icon={P.voice} label="Mensagem" tall><Field value="Bom dia! São 7 horas" /></Row>
              <Row icon={P.music} label="URL Youtube" tall><Field value="https://www.youtube.com/watch" /></Row>
              <Row icon={P.timer} label="Volume"><Slider pct={40.5} value="0.4" /></Row>
              <Row icon={P.shapes} label="Status"><Toggle on /></Row>
            </Card>
            <Card title="Projetor" action>
              <Runs
                items={[
                  [P.gear, "Proj. Menu"],
                  [P.volMute, "Proj. Mute"],
                  [hdmiIcon, "Proj. Input"],
                  [P.volPlus, "Proj. V+"],
                  [P.volMinus, "Proj. V-"],
                  [P.up, "Proj. Cima"],
                  [P.down, "Proj. Baixo"],
                  [P.right, "Proj. Frente"],
                  [P.left, "Proj. Tras"],
                  [okIcon, "Proj. OK"],
                  [P.exit, "Proj. ESC"],
                ]}
              />
            </Card>
            <Card title="Automação">
              <Row icon={P.playlist} label="Alarme - Aviso ativando em 10s"><Toggle on /></Row>
            </Card>
          </div>
        </div>
      </main>
      <div className="flex w-[17px] shrink-0 flex-col items-center bg-[#f1f1f1]">
        <svg viewBox="0 0 7 4" className="mt-[7px] h-1 w-[7px] shrink-0" fill="#505050"><path d="M3.500,0L7,4H0Z" /></svg>
        <div className="mt-[595px] h-[219px] w-[13px] shrink-0 bg-[#c1c1c1]" />
        <svg viewBox="0 0 7 4" className="mt-auto mb-[7px] h-1 w-[7px] shrink-0" fill="#505050"><path d="M0,0H7L3.500,4Z" /></svg>
      </div>
    </div>
  );
}
